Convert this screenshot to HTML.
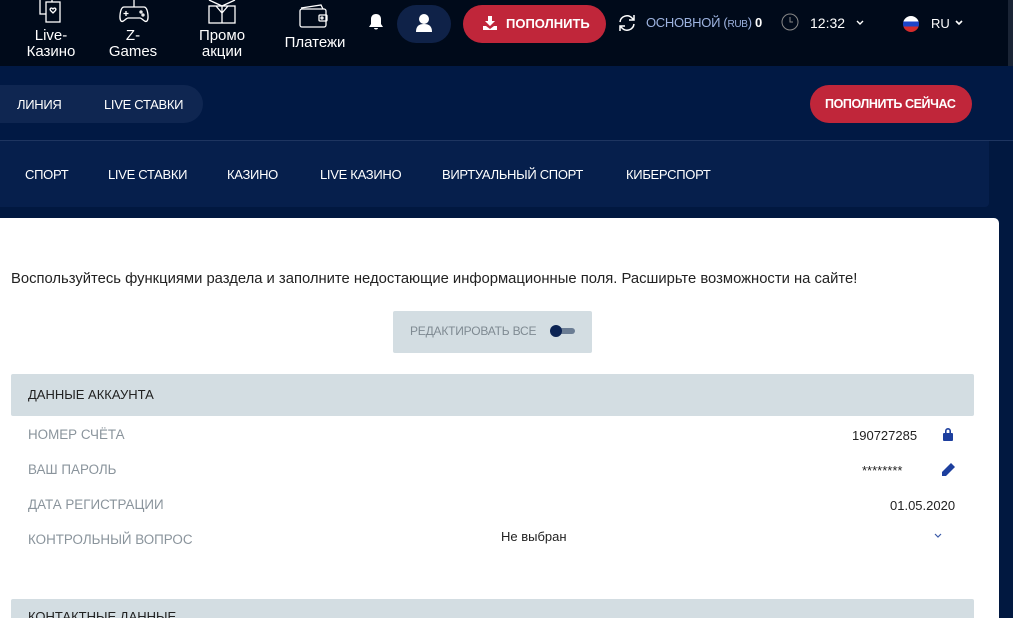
<!DOCTYPE html>
<html style="width:1013px;height:618px;overflow:hidden"><head><meta charset="utf-8"><style>
*{margin:0;padding:0;box-sizing:border-box}
body{width:1013px;height:618px;overflow:hidden;background:#011840;font-family:"Liberation Sans",sans-serif;position:relative}
.abs{position:absolute}
.top{left:0;top:0;width:1013px;height:66px;background:#000a1a}
.nm{color:#fff;font-size:15px;line-height:16px;text-align:center}
.narrow{letter-spacing:-0.3px}
.w{color:#fff}
</style></head><body>
<div class="abs top"></div>
<svg class="abs" style="left:38px;top:0" width="28" height="24" fill="none" stroke="#fff" stroke-width="1.3"><rect x="2" y="-4" width="12" height="18"/><rect x="8" y="2" width="14" height="20" fill="#000a1a"/><path d="M15 9c-2-2-4 0-2 2l2 2 2-2c2-2 0-4-2-2z"/></svg>
<div class="abs nm" style="left:20px;top:28px;width:62px">Live-<br>Казино</div>
<svg class="abs" style="left:118px;top:0" width="32" height="24" fill="none" stroke="#fff" stroke-width="1.3"><path d="M16 0v7M6 7h20c4 0 5 12 3 14-2 2-5-3-7-3H10c-2 0-5 5-7 3C1 19 2 7 6 7z"/><path d="M8 11v5M5.5 13.5h5"/><circle cx="23" cy="12" r="1"/><circle cx="25" cy="15" r="1"/></svg>
<div class="abs nm" style="left:100px;top:28px;width:66px">Z-<br>Games</div>
<svg class="abs" style="left:206px;top:0" width="32" height="24" fill="none" stroke="#fff" stroke-width="1.3"><rect x="3" y="6" width="26" height="17"/><path d="M16 6v17M3 0l13 6 13-6M10 6l6 7 6-7"/></svg>
<div class="abs nm" style="left:190px;top:28px;width:64px">Промо<br>акции</div>
<svg class="abs" style="left:298px;top:3px" width="34" height="26" fill="none" stroke="#fff" stroke-width="1.3"><path d="M3 5l20-3 2 4"/><rect x="2" y="6" width="26" height="18" rx="2"/><rect x="21" y="12" width="8" height="6" rx="1"/><circle cx="24" cy="15" r="1"/></svg>
<div class="abs nm" style="left:280px;top:35px;width:70px">Платежи</div>
<svg class="abs" style="left:368px;top:13px" width="16" height="18" fill="#fff"><path d="M8 1c-3 0-5 2-5 5v5l-2 3h14l-2-3V6c0-3-2-5-5-5zM6 15h4c0 2-4 2-4 0z"/></svg>
<div class="abs" style="left:397px;top:5px;width:54px;height:38px;border-radius:19px;background:#0f2248"></div>
<svg class="abs" style="left:416px;top:13px" width="16" height="20" fill="#fff"><circle cx="8" cy="6" r="5"/><path d="M0 19c0-6 3-8 8-8s8 2 8 8z"/></svg>
<div class="abs" style="left:463px;top:5px;width:143px;height:38px;border-radius:19px;background:#c0263a"></div>
<svg class="abs" style="left:483px;top:16px" width="14" height="14" fill="#fff"><path d="M5 0h4v5h3L7 10 2 5h3zM0 10h3l4 3 4-3h3v4H0z"/></svg>
<div class="abs w" style="left:506px;top:16px;font-size:13px;font-weight:bold">ПОПОЛНИТЬ</div>
<svg class="abs" style="left:617px;top:13px" width="20" height="20" fill="none" stroke="#fff" stroke-width="1.5"><path d="M3 9a7 7 0 0 1 12-4l2 2M17 11a7 7 0 0 1-12 4l-2-2"/><path d="M17 2v5h-5M3 18v-5h5"/></svg>
<div class="abs" style="left:646px;top:15px;font-size:13px;color:#9db3e0;letter-spacing:-0.3px">ОСНОВНОЙ (<span style="font-size:10px">RUB</span>) <b style="color:#fff">0</b></div>
<svg class="abs" style="left:781px;top:13px" width="18" height="18" fill="none" stroke="#888" stroke-width="1"><circle cx="9" cy="9" r="8"/><path d="M9 4v5h3"/></svg>
<div class="abs w" style="left:810px;top:15px;font-size:14px">12:32</div>
<svg class="abs" style="left:855px;top:19px" width="10" height="8" fill="none" stroke="#fff" stroke-width="1.4"><path d="M2 2l3 3 3-3"/></svg>
<div class="abs" style="left:903px;top:16px;width:16px;height:16px;border-radius:50%;background:linear-gradient(#fff 0 33%,#1c45c8 33% 66%,#d52b2b 66%)"></div>
<div class="abs w" style="left:931px;top:16px;font-size:13px">RU</div>
<svg class="abs" style="left:954px;top:19px" width="10" height="8" fill="none" stroke="#fff" stroke-width="1.6"><path d="M2 2l3 3 3-3"/></svg>
<div class="abs" style="left:1008px;top:0;width:5px;height:66px;background:#1a2435"></div>
<div class="abs" style="left:0;top:66px;width:1013px;height:74px;background:#011944"></div>
<div class="abs" style="left:-20px;top:85px;width:223px;height:38px;border-radius:19px;background:#0f2651"></div>
<div class="abs w narrow" style="left:17px;top:97px;font-size:13px">ЛИНИЯ</div>
<div class="abs w narrow" style="left:104px;top:97px;font-size:13px">LIVE СТАВКИ</div>
<div class="abs" style="left:810px;top:85px;width:162px;height:38px;border-radius:19px;background:#c0263a"></div>
<div class="abs w" style="left:825px;top:97px;font-size:12.5px;font-weight:bold;letter-spacing:-0.4px">ПОПОЛНИТЬ СЕЙЧАС</div>
<div class="abs" style="left:0;top:140px;width:1013px;height:1px;background:#1e3560"></div>
<div class="abs" style="left:0;top:141px;width:989px;height:66px;background:#061f4c;border-radius:0 0 4px 0"></div>
<div class="abs w narrow" style="left:25px;top:167px;font-size:13px">СПОРТ</div>
<div class="abs w narrow" style="left:108px;top:167px;font-size:13px">LIVE СТАВКИ</div>
<div class="abs w narrow" style="left:227px;top:167px;font-size:13px">КАЗИНО</div>
<div class="abs w narrow" style="left:320px;top:167px;font-size:13px">LIVE КАЗИНО</div>
<div class="abs w narrow" style="left:442px;top:167px;font-size:13px">ВИРТУАЛЬНЫЙ СПОРТ</div>
<div class="abs w narrow" style="left:626px;top:167px;font-size:13px">КИБЕРСПОРТ</div>
<div class="abs" style="left:0;top:218px;width:999px;height:400px;background:#fff;border-radius:0 5px 0 0"></div>
<div class="abs" style="left:11px;top:271px;font-size:14.8px;color:#222">Воспользуйтесь функциями раздела и заполните недостающие информационные поля. Расширьте возможности на сайте!</div>
<div class="abs" style="left:393px;top:311px;width:199px;height:42px;background:#d3dde2;border-radius:2px"></div>
<div class="abs" style="left:410px;top:324px;font-size:12px;color:#7f8a92;letter-spacing:-0.2px">РЕДАКТИРОВАТЬ ВСЕ</div>
<div class="abs" style="left:555px;top:328px;width:20px;height:6px;border-radius:3px;background:#6b7d94"></div>
<div class="abs" style="left:550px;top:325px;width:12px;height:12px;border-radius:50%;background:#0c2454"></div>
<div class="abs" style="left:11px;top:374px;width:963px;height:42px;background:#d3dde2;border-radius:2px"></div>
<div class="abs" style="left:28px;top:387px;font-size:13px;color:#222">ДАННЫЕ АККАУНТА</div>
<div class="abs" style="left:28px;top:427px;font-size:13.4px;color:#8a949c">НОМЕР СЧЁТА</div>
<div class="abs" style="left:28px;top:462px;font-size:13.4px;color:#8a949c">ВАШ ПАРОЛЬ</div>
<div class="abs" style="left:28px;top:497px;font-size:13.4px;color:#8a949c">ДАТА РЕГИСТРАЦИИ</div>
<div class="abs" style="left:28px;top:532px;font-size:13.4px;color:#8a949c">КОНТРОЛЬНЫЙ ВОПРОС</div>
<div class="abs" style="left:852px;top:428px;font-size:13px;color:#222">190727285</div>
<svg class="abs" style="left:942px;top:427px" width="12" height="14" fill="#1d3f9e"><path d="M3 6V4a3 3 0 0 1 6 0v2h-1.6V4a1.4 1.4 0 0 0-2.8 0v2z"/><rect x="1" y="6" width="10" height="8" rx="1"/></svg>
<div class="abs" style="left:862px;top:463px;font-size:13px;color:#222">********</div>
<svg class="abs" style="left:940px;top:462px" width="16" height="16" fill="#1d3f9e"><path d="M11 1l4 4-9 9H2v-4z"/></svg>
<div class="abs" style="left:890px;top:498px;font-size:13px;color:#222">01.05.2020</div>
<div class="abs" style="left:501px;top:529px;font-size:13px;color:#222">Не выбран</div>
<svg class="abs" style="left:933px;top:532px" width="10" height="8" fill="none" stroke="#3a5aa8" stroke-width="1.2"><path d="M2 2l3 3 3-3"/></svg>
<div class="abs" style="left:11px;top:599px;width:963px;height:19px;background:#d3dde2;border-radius:2px 2px 0 0;overflow:hidden"><div style="position:absolute;left:17px;top:10px;font-size:13px;color:#222">КОНТАКТНЫЕ ДАННЫЕ</div></div>
</body></html>
